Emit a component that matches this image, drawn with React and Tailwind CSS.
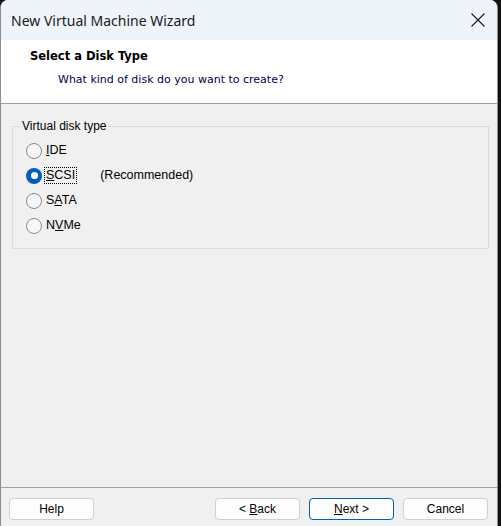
function Radio({ checked, label, extra }) {
    return (
        <div className="flex items-center h-[25px]">
            {checked ? (
                <span className="w-[16px] h-[16px] rounded-full bg-[#005fb8] flex items-center justify-center">
                    <span className="w-[7px] h-[7px] rounded-full bg-white"></span>
                </span>
            ) : (
                <span className="w-[16px] h-[16px] rounded-full border border-[#8a8a8a] bg-[#f7f7f7]"></span>
            )}
            <span className={`ml-[3px] px-[1px] leading-[15px] ${checked ? 'outline outline-1 outline-dotted outline-black' : ''}`}>
                {label}
            </span>
            {extra && <span className="ml-[24px]">{extra}</span>}
        </div>
    );
}

function Button({ children, primary }) {
    return (
        <button
            className={`w-[85px] h-[22px] rounded-[4px] bg-[#fdfdfd] text-[12px] text-black border ${primary ? 'border-[#005fb8]' : 'border-[#d0d0d0]'}`}
        >
            {children}
        </button>
    );
}

export default function App() {
    return (
        <div className="w-[501px] h-[526px] bg-[#111] overflow-hidden" style={{ fontFamily: '"Liberation Sans", Arial, sans-serif' }}>
            <div className="w-[498px] h-[526px] flex flex-col rounded-t-[8px] overflow-hidden border-l border-r border-[#8c8c8c] bg-[#f0f0f0]">
                <div className="h-[40px] bg-[#eef4f9] flex items-center justify-between pl-[10px] pr-[12px]">
                    <span className="text-[14px] text-[#1a1a1a]" style={{ fontFamily: '"Noto Sans", sans-serif' }}>New Virtual Machine Wizard</span>
                    <svg width="14" height="14" viewBox="0 0 14 14" className="text-[#1a1a1a]">
                        <path d="M0.5 0.5 L13.5 13.5 M13.5 0.5 L0.5 13.5" stroke="currentColor" strokeWidth="1.1" fill="none" />
                    </svg>
                </div>
                <div className="h-[64px] bg-white border-b border-[#a0a0a0] pt-[8px]" style={{ fontFamily: '"DejaVu Sans", sans-serif' }}>
                    <div className="pl-[29px] font-bold text-black text-[11.5px]">Select a Disk Type</div>
                    <div className="pl-[57px] mt-[7px] text-[11px] text-[#000050]">What kind of disk do you want to create?</div>
                </div>
                <div className="flex-1 px-[11px] pt-[15px]">
                    <fieldset className="border border-[#dcdcdc] h-[130px] px-[13px] pb-[8px] w-[477px]">
                        <legend className="px-[1px] ml-[-5px] text-[12px] text-black leading-[14px]">Virtual disk type</legend>
                        <div className="text-[12.5px] text-black mt-[5px]">
                            <Radio label={<><span className="underline">I</span>DE</>} />
                            <Radio checked label={<><span className="underline">S</span>CSI</>} extra="(Recommended)" />
                            <Radio label={<>S<span className="underline">A</span>TA</>} />
                            <Radio label={<>N<span className="underline">V</span>Me</>} />
                        </div>
                    </fieldset>
                </div>
                <div className="h-[39px] border-t border-[#a0a0a0] flex items-start pt-[10px] pl-[8px]">
                    <Button>Help</Button>
                    <div className="ml-auto flex gap-[9px] pr-[9px]">
                        <Button>&lt; <span className="underline">B</span>ack</Button>
                        <Button primary><span className="underline">N</span>ext &gt;</Button>
                        <Button>Cancel</Button>
                    </div>
                </div>
            </div>
        </div>
    );
}
